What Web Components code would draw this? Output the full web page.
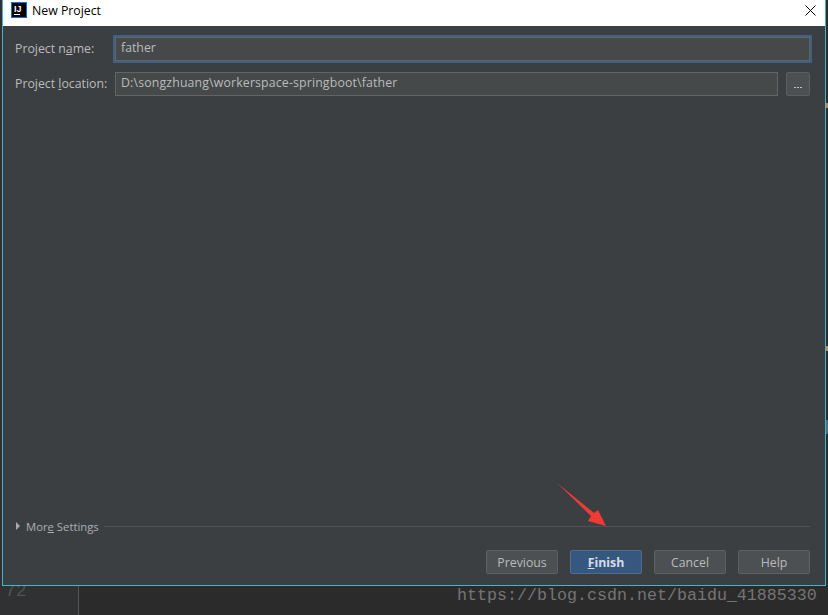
<!DOCTYPE html>
<html>
<head>
<meta charset="utf-8">
<style>
  html, body { margin: 0; height: 100%; background: #2b2b2b; overflow: hidden; }
</style>
</head>
<body>
<template id="editor_tpl">
  <style>
    :host { display: grid; grid-template-columns: 78px 1px 1fr; width: 828px; height: 615px; background: #2b2b2b; position: relative; font-family: "Liberation Mono", monospace; }
    .gutter { background: #2f3133; color: #505355; font-size: 18px; line-height: 20px; display: flex; align-items: flex-end; padding: 0 0 14px 5px; box-sizing: border-box; }
    .line { background: #555; }
    .main { background: #2b2b2b; }
    .mark { position: absolute; right: 0; width: 2px; height: 5px; background: #b8904f; }
    .water { position: absolute; left: 457px; top: 585px; font-size: 16.67px; line-height: 22px; color: #757575; white-space: nowrap; }
  </style>
  <div class="gutter">72</div>
  <div class="line"></div>
  <div class="main"></div>
  <i class="mark" style="top:103px"></i>
  <i class="mark" style="top:346px"></i>
  <i class="mark" style="top:420px;background:#4e6f80;height:14px"></i>
  <slot></slot>
  <div class="water">https://blog.csdn.net/baidu_41885330</div>
</template>

<template id="dialog_tpl">
  <style>
    :host { display: flex; flex-direction: column; position: absolute; left: 2px; top: 0; width: 824px; height: 586px; box-sizing: border-box; border: 1px solid #3fb6cb; border-top: 0; background: #3c3f41; color: #bbbbbb; font-family: "Open Sans", sans-serif; font-size: 12.3px; }
    .title { display: flex; align-items: center; height: 26px; box-sizing: border-box; background: #fff; color: #000; gap: 5px; padding: 0 0 6px 8px; flex: none; }
    .title svg.logo { flex: none; }
    .title span { flex: 1; font-size: 12.3px; }
    .title svg.close { margin-right: 9px; }
    .body { flex: 1; display: flex; flex-direction: column; padding: 11px 15px 0 12px; }
    .spacer { flex: 1; }
    .foot { display: flex; justify-content: flex-end; gap: 12px; padding: 15px 15px 11px 0; }
  </style>
  <div class="title">
    <svg class="logo" width="16" height="16" viewBox="0 0 16 16">
      <rect x=".5" y=".5" width="15" height="15" fill="#000" stroke="#0f6ee0"/>
      <rect x="3" y="12" width="6" height="1" fill="#fff"/>
      <text x="3" y="10" font-size="9" font-weight="700" fill="#fff" font-family="Liberation Sans, sans-serif">IJ</text>
    </svg>
    <span>New Project</span>
    <svg class="close" width="11" height="11" viewBox="0 0 11 11"><path d="M.5.5l10 10M10.500.5l-10 10" stroke="#000" fill="none"/></svg>
  </div>
  <div class="body"><slot></slot><div class="spacer"></div><slot name="more"></slot></div>
  <div class="foot"><slot name="buttons"></slot></div>
</template>

<template id="row_tpl">
  <style>
    :host { display: flex; align-items: center; height: 24px; margin-bottom: 11px; gap: 6px; }
    label { width: 94px; flex: none; white-space: nowrap; padding-bottom: 2px; }
    .input { flex: 1; height: 24px; box-sizing: border-box; background: #45494a; border: 1px solid #646464; padding: 0 5px; line-height: 20px; color: #bbb; white-space: nowrap; }
    :host([focused]) .input { outline: 2px solid #3d6185; }
    :host([browse]) .input { letter-spacing: .16px; }
    .browse { width: 24px; height: 24px; box-sizing: border-box; margin-left: 2px; flex: none; border: 1px solid #5e6060; border-radius: 2px; background: #4c5052; display: flex; justify-content: center; align-items: flex-end; padding-bottom: 7px; gap: 1px; }
    .browse i { width: 2px; height: 1px; background: #c0c0c0; }
  </style>
  <label><slot name="label"></slot></label>
  <div class="input"><slot></slot></div>
  <div class="browse"><i></i><i></i><i></i></div>
</template>

<template id="more_tpl">
  <style>
    :host { display: flex; align-items: center; gap: 5px; height: 16px; margin-bottom: 1px; }
    .tri { width: 0; height: 0; border-left: 4px solid #a9a9a9; border-top: 4px solid transparent; border-bottom: 4px solid transparent; margin-left: 1px; }
    .txt { margin-left: 1px; white-space: nowrap; color: #a9b0b4; font-size: 11.300px; }
    .rule { flex: 1; height: 1px; background: #505354; }
  </style>
  <div class="tri"></div>
  <div class="txt"><slot></slot></div>
  <div class="rule"></div>
</template>

<template id="btn_tpl">
  <style>
    :host { display: flex; align-items: center; justify-content: center; width: 72px; height: 24px; box-sizing: border-box; border: 1px solid #5e6060; border-radius: 2px; background: #4c5052; color: #bbbbbb; }
    :host([primary]) { background: #365880; border-color: #4c708c; color: #d7dde2; font-weight: 700; }
  </style>
  <slot></slot>
</template>

<template id="arrow_tpl">
  <style>
    :host { position: absolute; left: 556px; top: 481px; width: 52px; height: 46px; display: block; }
  </style>
  <svg width="52" height="46" viewBox="0 0 52 46"><path d="M1 2L38 32L42 29L50 45L32 40L35 35Z" fill="#f23a35"/></svg>
</template>

<ide-editor>
  <new-project-dialog>
    <form-row focused><span slot="label">Project n<u>a</u>me:</span>father</form-row>
    <form-row browse><span slot="label">Project <u>l</u>ocation:</span>D:\songzhuang\workerspace-springboot\father</form-row>
    <more-settings slot="more">Mor<u>e</u> Settings</more-settings>
    <dialog-button slot="buttons">Previous</dialog-button>
    <dialog-button slot="buttons" primary><span><u>F</u>inish</span></dialog-button>
    <dialog-button slot="buttons">Cancel</dialog-button>
    <dialog-button slot="buttons">Help</dialog-button>
  </new-project-dialog>
  <red-arrow></red-arrow>
</ide-editor>

<script>
  function def(name, tplId, init) {
    customElements.define(name, class extends HTMLElement {
      constructor() {
        super();
        this.attachShadow({mode: 'open'});
        this.shadowRoot.appendChild(document.querySelector(tplId).content.cloneNode(true));
        if (init) init(this);
      }
    });
  }
  def('ide-editor', '#editor_tpl');
  def('new-project-dialog', '#dialog_tpl');
  def('form-row', '#row_tpl', el => {
    // only the location row has the ... button
    if (!el.hasAttribute('browse')) el.shadowRoot.querySelector('.browse').remove();
  });
  def('more-settings', '#more_tpl');
  def('dialog-button', '#btn_tpl');
  def('red-arrow', '#arrow_tpl');
</script>
</body>
</html>
